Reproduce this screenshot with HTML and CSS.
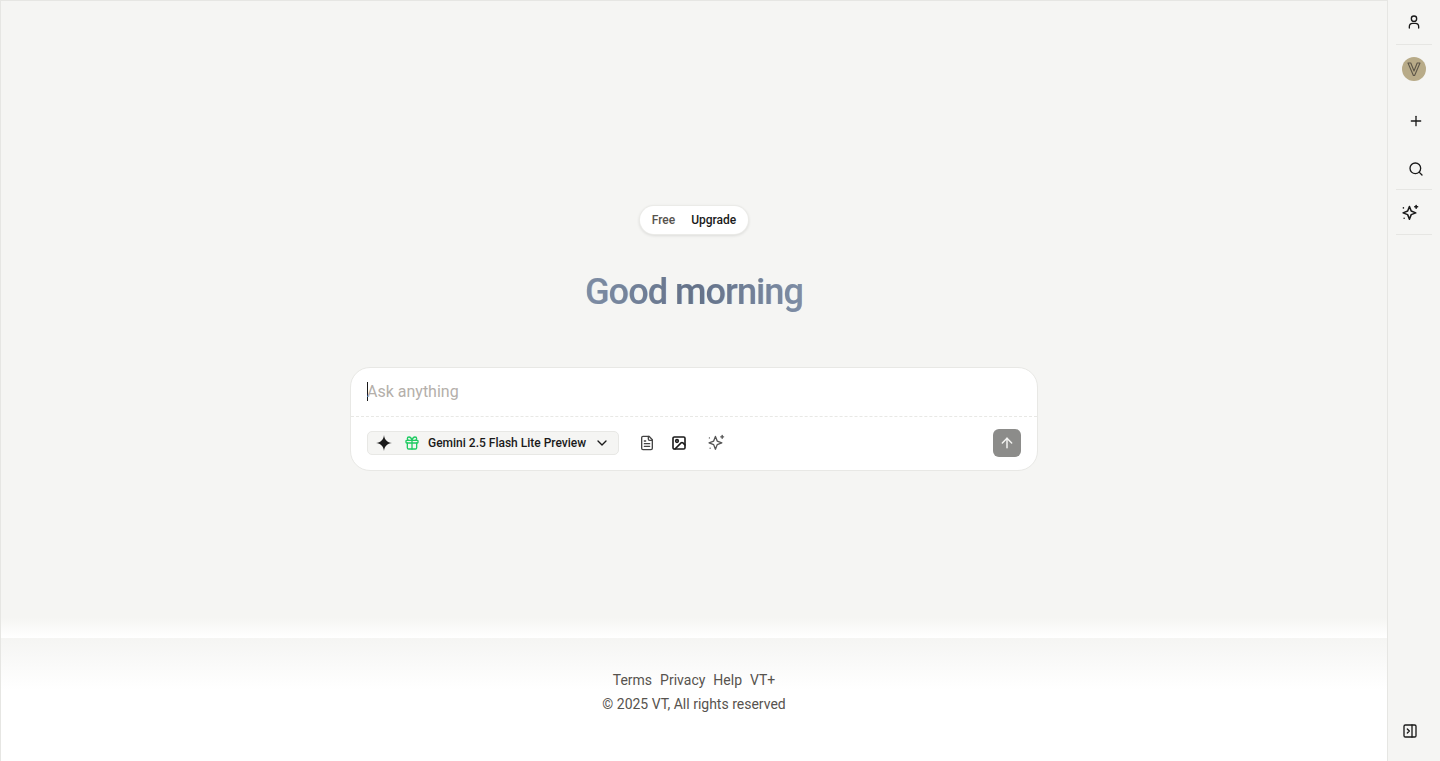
FILE: index.html
```html
<!DOCTYPE html>
<html lang="en">
<head>
  <meta charset="UTF-8" />
  <meta name="viewport" content="width=device-width, initial-scale=1.0" />
  <title>VT</title>
  <link rel="stylesheet" href="styles.css">
</head>
<body>
  <div class="app">
    <main class="main">
      <section class="hero">
        <div class="plan-pill">
          <span class="plan-free">Free</span>
          <span class="plan-upgrade">Upgrade</span>
        </div>
        <h1 class="greeting">Good morning</h1>
        <div class="composer">
          <div class="composer-input">
            <span class="caret"></span>
            <span class="placeholder">Ask anything</span>
          </div>
          <div class="composer-bar">
            <button class="model-btn">
              <svg class="icon-gemini" width="16" height="16" viewBox="0 0 16 16"><path fill="#1a1a1a" d="M8 0C8.500 4.800 11.200 7.500 16 8 11.200 8.500 8.500 11.200 8 16 7.500 11.200 4.800 8.500 0 8 4.800 7.500 7.500 4.800 8 0Z"/></svg>
              <svg class="icon-gift" width="16" height="16" viewBox="0 0 24 24" fill="none" stroke="#1fcb62" stroke-width="2" stroke-linecap="round" stroke-linejoin="round"><rect x="3" y="8" width="18" height="4" rx="1"/><path d="M12 8v13"/><path d="M19 12v7a2 2 0 0 1-2 2H7a2 2 0 0 1-2-2v-7"/><path d="M7.500 8a2.500 2.500 0 0 1 0-5A4.800 8 0 0 1 12 8a4.800 8 0 0 1 4.500-5 2.500 2.500 0 0 1 0 5"/></svg>
              <span class="model-name">Gemini 2.5 Flash Lite Preview</span>
              <svg class="icon-chevron" width="16" height="16" viewBox="0 0 24 24" fill="none" stroke="#1a1a1a" stroke-width="2" stroke-linecap="round" stroke-linejoin="round"><path d="m6 9 6 6 6-6"/></svg>
            </button>
            <div class="tools">
              <svg class="tool-doc" width="16" height="16" viewBox="0 0 24 24" fill="none" stroke="#444" stroke-width="2" stroke-linecap="round" stroke-linejoin="round"><path d="M15 2H6a2 2 0 0 0-2 2v16a2 2 0 0 0 2 2h12a2 2 0 0 0 2-2V7Z"/><path d="M14 2v4a2 2 0 0 0 2 2h4"/><path d="M10 9H8"/><path d="M16 13H8"/><path d="M16 17H8"/></svg>
              <svg class="tool-image" width="16" height="16" viewBox="0 0 24 24" fill="none" stroke="#1a1a1a" stroke-width="2.400" stroke-linecap="round" stroke-linejoin="round"><rect x="3" y="3" width="18" height="18" rx="2"/><circle cx="9" cy="9" r="2"/><path d="m21 15-3.100-3.100a2 2 0 0 0-2.800 0L6 21"/></svg>
              <svg class="tool-spark" width="17" height="17" viewBox="0 0 24 24" fill="none" stroke="#555" stroke-width="1.900" stroke-linecap="round" stroke-linejoin="round"><path d="M10.500 3.500 13 10l6.500 2.500L13 15l-2.500 6.500L8 15l-6.500-2.500L8 10Z"/><path d="M20 2v4"/><path d="M22 4h-4"/><path d="M3 20h.01"/><path d="M2 5.500h.01"/></svg>
            </div>
            <button class="send-btn">
              <svg width="16" height="16" viewBox="0 0 24 24" fill="none" stroke="#f5f5f3" stroke-width="2.200" stroke-linecap="round" stroke-linejoin="round"><path d="m5 12 7-7 7 7"/><path d="M12 19V5"/></svg>
            </button>
          </div>
        </div>
        <div class="hero-fade"></div>
      </section>
      <footer class="footer">
        <nav class="footer-links">
          <a>Terms</a>
          <a>Privacy</a>
          <a>Help</a>
          <a>VT+</a>
        </nav>
        <p class="copyright">© 2025 VT, All rights reserved</p>
      </footer>
    </main>

    <aside class="sidebar">
      <div class="side-group user-row">
        <svg width="16" height="16" viewBox="0 0 24 24" fill="none" stroke="#1a1a1a" stroke-width="2" stroke-linecap="round" stroke-linejoin="round"><circle cx="12" cy="7" r="4"/><path d="M5 21v-2a5 5 0 0 1 5-5h4a5 5 0 0 1 5 5v2"/></svg>
      </div>
      <div class="avatar-row">
        <div class="avatar">
          <svg width="14" height="14" viewBox="0 0 14 14" fill="none" stroke="#5d5648" stroke-width="1.100" stroke-linejoin="round"><path d="M1 1h2.800L7 9l3.200-8H13L7.600 13.500H6.400Z"/></svg>
        </div>
      </div>
      <div class="side-btn plus-row">
        <svg width="16" height="16" viewBox="0 0 24 24" fill="none" stroke="#1a1a1a" stroke-width="2" stroke-linecap="round"><path d="M5 12h14"/><path d="M12 5v14"/></svg>
      </div>
      <div class="side-btn search-row">
        <svg width="16" height="16" viewBox="0 0 24 24" fill="none" stroke="#1a1a1a" stroke-width="2" stroke-linecap="round"><circle cx="11" cy="11" r="8"/><path d="m21 21-4.300-4.300"/></svg>
      </div>
      <div class="side-group spark-row">
        <svg width="17" height="17" viewBox="0 0 24 24" fill="none" stroke="#1a1a1a" stroke-width="2.200" stroke-linecap="round" stroke-linejoin="round"><path d="M10.500 3.500 13 10l6.500 2.500L13 15l-2.500 6.500L8 15l-6.500-2.500L8 10Z"/><path d="M20 2v4"/><path d="M22 4h-4"/><path d="M3 20h.01"/><path d="M2 5.500h.01"/></svg>
      </div>
      <div class="side-bottom">
        <svg width="16" height="16" viewBox="0 0 24 24" fill="none" stroke="#1a1a1a" stroke-width="2" stroke-linecap="round" stroke-linejoin="round"><rect x="3" y="3" width="18" height="18" rx="2"/><path d="M15 3v18"/><path d="m8 9 3 3-3 3"/></svg>
      </div>
    </aside>
  </div>
</body>
</html>
```
FILE: styles.css
```css
* {
  box-sizing: border-box;
}

body {
  margin: 0;
  font-family: Roboto, sans-serif;
  background: #fff;
  color: #1a1a1a;
}

.app {
  display: flex;
  height: 761px;
  overflow: hidden;
}

.main {
  flex: 1;
  display: flex;
  flex-direction: column;
  border-left: 1px solid #e6e6e3;
  border-top: 1px solid #e6e6e3;
}

.hero {
  position: relative;
  height: 637px;
  background: #f5f5f3;
  display: flex;
  flex-direction: column;
  align-items: center;
  padding-top: 205px;
}

.hero-fade {
  position: absolute;
  left: 0;
  right: 0;
  bottom: 0;
  height: 20px;
  background: linear-gradient(to bottom, #f5f5f3, #fff);
}

.plan-pill {
  display: flex;
  gap: 16px;
  height: 28px;
  align-items: center;
  padding: 0 12px;
  background: #fff;
  border-radius: 14px;
  box-shadow: 0 0 0 1px #ebebe8, 0 1px 3px 1px rgba(0, 0, 0, 0.1);
  font-size: 12px;
  font-weight: 500;
}

.plan-free {
  color: #57534e;
}

.plan-upgrade {
  color: #1a1a1a;
}

.greeting {
  margin: 36px 0 53px;
  font-size: 36px;
  line-height: 44px;
  font-weight: 500;
  letter-spacing: -0.9px;
  background: linear-gradient(to right, #8394ac, #56657c 50%, #8394ac);
  -webkit-background-clip: text;
  background-clip: text;
  color: transparent;
  text-shadow: -0.4px 0 rgba(205, 165, 115, 0.16), 0.4px 0 rgba(70, 115, 180, 0.32);
}

.composer {
  width: 688px;
  height: 104px;
  background: #fff;
  border: 1px solid #e8e8e5;
  border-radius: 20px;
}

.composer-input {
  height: 49px;
  display: flex;
  align-items: center;
  padding: 0 0 2px 16px;
  border-bottom: 1px dashed #e8e8e5;
}

.caret {
  width: 1px;
  height: 19px;
  background: #1a1a1a;
  margin-right: -1px;
}

.placeholder {
  font-size: 16px;
  color: #b4afaa;
}

.composer-bar {
  display: flex;
  align-items: center;
  height: 51px;
  padding: 0 16px;
}

.model-btn {
  display: flex;
  align-items: center;
  width: 252px;
  height: 24px;
  padding: 0 8px;
  background: #f5f5f3;
  border: 1px solid #e8e8e5;
  border-radius: 5px;
  font-family: inherit;
  font-size: 12px;
  font-weight: 500;
  color: #1a1a1a;
}

.icon-gift {
  margin-left: 12px;
}

.model-name {
  margin-left: 8px;
  white-space: nowrap;
}

.icon-chevron {
  margin-left: auto;
}

.tools {
  display: flex;
  align-items: center;
  margin-left: 20px;
  gap: 16px;
}

.tool-spark {
  margin-left: 5px;
}

.send-btn {
  margin-left: auto;
  width: 28px;
  height: 28px;
  padding: 0;
  border: none;
  border-radius: 6px;
  background: #8c8c8a;
  display: flex;
  align-items: center;
  justify-content: center;
}

.footer {
  flex: 1;
  background: linear-gradient(to bottom, #f5f5f3, #fff 52px);
  display: flex;
  flex-direction: column;
  align-items: center;
  padding-top: 30px;
  font-size: 14px;
  color: #57534e;
}

.footer-links {
  display: flex;
  gap: 8px;
  height: 24px;
  align-items: center;
}

.copyright {
  margin: 0;
  height: 24px;
  line-height: 24px;
}

.sidebar {
  width: 53px;
  flex-shrink: 0;
  display: flex;
  flex-direction: column;
  align-items: center;
  background: #f5f5f3;
  border-left: 1px solid #e6e6e3;
}

.side-group {
  width: 36px;
  display: flex;
  align-items: center;
}

.user-row {
  height: 45px;
  justify-content: center;
  border-bottom: 1px solid #e6e6e3;
}

.avatar-row {
  height: 48px;
  display: flex;
  align-items: center;
}

.avatar {
  width: 24px;
  height: 24px;
  border-radius: 50%;
  background: #b8ab88;
  display: flex;
  align-items: center;
  justify-content: center;
}

.side-btn {
  height: 48px;
  display: flex;
  align-items: center;
  padding-left: 4px;
}

.plus-row {
  height: 56px;
}

.search-row {
  height: 41px;
  width: 36px;
  justify-content: center;
  border-bottom: 1px solid #e6e6e3;
}

.spark-row {
  height: 45px;
  padding-left: 6px;
  border-bottom: 1px solid #e6e6e3;
}

.side-bottom {
  margin-top: auto;
  height: 60px;
  padding-right: 8px;
  display: flex;
  align-items: center;
}
```
